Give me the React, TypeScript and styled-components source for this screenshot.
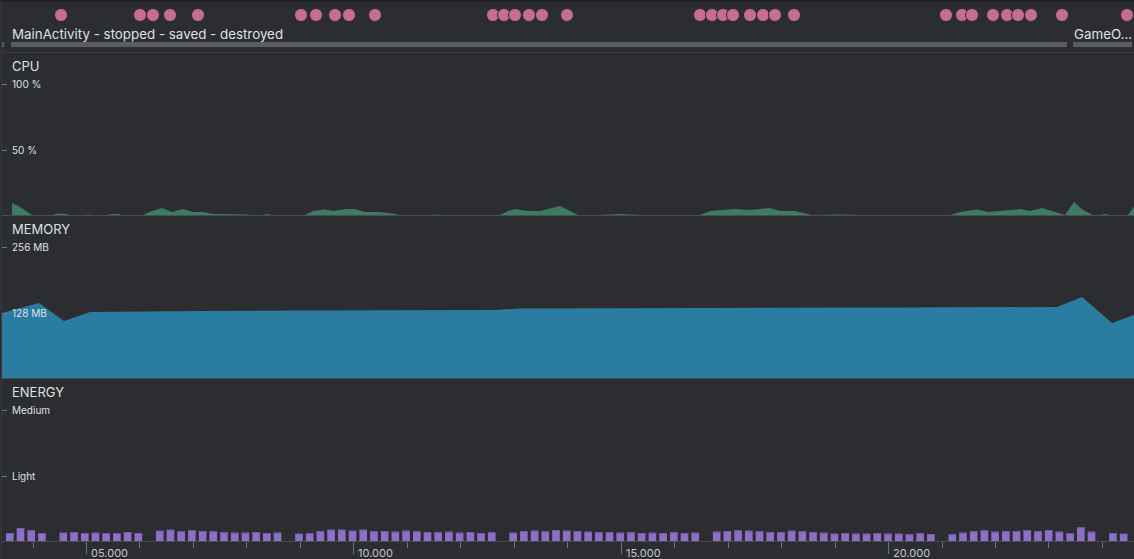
import React from "react";
import styled, { createGlobalStyle } from "styled-components";

const colors = {
  background: "#2b2d30",
  edge: "#393b40",
  topEdge: "#1f2023",
  divider: "#393b40",
  baseline: "#4a4c51",
  tick: "#6f737a",
  text: "#dfe1e5",
  axisText: "#c3c7ce",
  activity: "#5a5d62",
  event: "#c76c92",
  cpu: "#3d7b63",
  memory: "#2a7ca0",
  energy: "#8d6fc8",
  energyTop: "#7459aa",
};

const FONT = `Inter, "Noto Sans", "Liberation Sans", sans-serif`;

// chart columns start at x = 2 on the page (1px padding + 1px edge)
const VIEW_X = 2;
const CHART_W = 1132;
const CHART_H = 162;

const EVENT_X = [
  61, 140, 153, 170, 198, 301, 316, 335, 349, 375, 493, 504, 515, 529, 542, 567,
  700, 712, 723, 733, 750, 763, 775, 794, 946, 962, 972, 993, 1007, 1018, 1031,
  1062, 1127,
];

const ACTIVITIES = [
  { left: 0, width: 2, label: "" },
  { left: 7, width: 1056, label: "MainActivity - stopped - saved - destroyed" },
  { left: 6, width: 59, label: "GameO..." },
];

// page coordinates, shifted into each section below
const CPU_POINTS: [number, number][] = [
  [12, 215], [12, 203], [20, 207], [32, 215], [52, 215], [58, 213.5], [66, 214],
  [70, 215], [85, 215], [88, 214.5], [92, 215], [107, 215], [112, 214], [118, 214],
  [122, 215], [143, 215], [152, 211], [162, 208], [172, 212], [183, 209], [193, 212],
  [203, 212], [213, 214], [247, 214.5], [252, 215], [262, 215], [267, 214], [272, 215],
  [305, 215], [313, 211], [325, 209.5], [333, 211], [347, 209], [355, 209], [365, 212],
  [380, 212], [395, 214], [400, 215], [430, 215], [436, 214.5], [442, 215], [500, 215],
  [508, 211], [515, 209], [528, 211], [540, 211], [548, 209], [560, 206], [568, 210],
  [578, 215], [600, 215], [620, 214], [640, 215], [700, 215], [710, 211], [735, 209],
  [750, 210], [770, 208], [780, 211], [795, 211], [812, 215], [840, 214.5], [860, 215],
  [950, 215], [960, 212], [977, 209.5], [988, 212], [1000, 211], [1020, 209], [1030, 211],
  [1042, 208], [1062, 214], [1065, 215], [1074, 202], [1083, 210], [1093, 215],
  [1100, 215], [1105, 214], [1110, 215], [1128, 215], [1134, 207], [1134, 215],
];

const MEMORY_POINTS: [number, number][] = [
  [2, 378], [2, 313], [39, 303], [64, 321], [90, 312], [200, 311], [300, 310.5],
  [495, 310], [520, 308.5], [700, 308], [900, 307.5], [1057, 307], [1082, 297],
  [1112, 323], [1134, 315], [1134, 378],
];

const ENERGY_HEIGHTS = [
  8, 13, 10.7, 8, 0, 8.3, 9, 8, 8.3, 8, 8, 9, 8, 0, 10.3, 11.3, 9.7, 11, 10, 9.7,
  8.7, 8.3, 8.3, 9, 8, 8.3, 0, 7.3, 7.7, 10, 11.3, 11.3, 10.3, 11.3, 9.7,
  10, 9.3, 10.3, 9.7, 9, 8.7, 9.3, 8.3, 9, 8, 8.7, 0, 8.3, 10, 10.3, 9.7, 11, 10.3,
  10, 9.3, 8.7, 9, 8.3, 8.7, 8, 8.3, 8, 8.7, 8, 8.3, 0, 9.3, 10, 10.7, 10.3, 9.7,
  9, 9, 10.3, 9.7, 9, 8.3, 7.3, 8, 7.3, 7.3, 8, 7.3, 7.3, 6.7, 7.7, 7, 0,
  6.7, 8.3, 9.7, 10.7, 9.3, 10, 10, 11, 10, 11, 9.3, 7.7, 13.7, 9.3, 0, 8, 7.3,
];

const SECOND = 53.47;
const FIVE_SECONDS_X = 86;
const AXIS_LABELS: Record<number, string> = {
  0: "05.000",
  5: "10.000",
  10: "15.000",
  15: "20.000",
};

const toPoints = (pts: [number, number][], top: number) =>
  pts.map(([x, y]) => `${x},${y - top}`).join(" ");

const GlobalStyle = createGlobalStyle`
  html, body {
    margin: 0;
    background: ${colors.background};
  }
  body {
    font-family: ${FONT};
    color: ${colors.text};
    -webkit-font-smoothing: antialiased;
  }
`;

export default function App() {
  return (
    <>
      <GlobalStyle />
      <Page>
        <Frame>
          <Header>
            <EventTrack viewBox={`${VIEW_X} 0 ${CHART_W} 25`}>
              {EVENT_X.map((x, i) => (
                <circle
                  key={i}
                  cx={x}
                  cy={13}
                  r={6.5}
                  fill={colors.event}
                  stroke={colors.background}
                  strokeWidth={1}
                />
              ))}
            </EventTrack>
            <ActivityTrack>
              {ACTIVITIES.map((a, i) => (
                <Activity key={i} $left={a.left} $width={a.width}>
                  <ActivityLabel>{a.label || "\u00a0"}</ActivityLabel>
                  <ActivityBar />
                </Activity>
              ))}
            </ActivityTrack>
          </Header>

          <MonitorSection title="CPU" top="100 %" mid="50 %">
            <polygon points={toPoints(CPU_POINTS, 53)} fill={colors.cpu} />
          </MonitorSection>

          <MonitorSection title="MEMORY" top="256 MB" mid="128 MB">
            <polygon points={toPoints(MEMORY_POINTS, 216)} fill={colors.memory} />
          </MonitorSection>

          <MonitorSection title="ENERGY" top="Medium" mid="Light">
            {ENERGY_HEIGHTS.map((h, i) =>
              h > 0 ? (
                <g key={i}>
                  <rect
                    x={6 + i * 10.71}
                    y={CHART_H - h}
                    width={7.6}
                    height={h}
                    fill={colors.energy}
                  />
                  <rect
                    x={6 + i * 10.71}
                    y={CHART_H - h}
                    width={7.6}
                    height={1}
                    fill={colors.energyTop}
                  />
                </g>
              ) : null
            )}
          </MonitorSection>

          <TimeAxis viewBox={`${VIEW_X} 0 ${CHART_W} 17`}>
            {Array.from({ length: 22 }, (_, i) => {
              const n = i - 1;
              const x = Math.round(FIVE_SECONDS_X + n * SECOND) + 0.5;
              const label = AXIS_LABELS[n];
              return (
                <g key={i}>
                  <line
                    x1={x}
                    x2={x}
                    y1={0}
                    y2={label ? 12 : 6}
                    stroke={colors.tick}
                    strokeWidth={1}
                  />
                  {label && (
                    <AxisText x={x + 4.5} y={15}>
                      {label}
                    </AxisText>
                  )}
                </g>
              );
            })}
          </TimeAxis>
        </Frame>
      </Page>
    </>
  );
}

type SectionProps = {
  title: string;
  top: string;
  mid: string;
  children: React.ReactNode;
};

const MonitorSection = ({ title, top, mid, children }: SectionProps) => (
  <Section>
    <Chart viewBox={`${VIEW_X} 0 ${CHART_W} ${CHART_H}`} preserveAspectRatio="none">
      {children}
    </Chart>
    <Labels>
      <Title>{title}</Title>
      <ScaleMark $gap={4}>{top}</ScaleMark>
      <ScaleMark $gap={54}>{mid}</ScaleMark>
    </Labels>
  </Section>
);

const Page = styled.div`
  width: 1134px;
  height: 559px;
  padding-left: 1px;
  box-sizing: border-box;
  overflow: hidden;
`;

const Frame = styled.div`
  display: flex;
  flex-direction: column;
  height: 100%;
  border-left: 1px solid ${colors.edge};
  border-top: 2px solid ${colors.topEdge};
  box-sizing: border-box;
`;

const Header = styled.header`
  display: flex;
  flex-direction: column;
  height: 50px;
  flex: none;
  border-bottom: 1px solid ${colors.divider};
`;

const EventTrack = styled.svg`
  display: block;
  width: ${CHART_W}px;
  height: 25px;
  flex: none;
`;

const ActivityTrack = styled.div`
  display: flex;
  height: 25px;
`;

const Activity = styled.div<{ $left: number; $width: number }>`
  display: flex;
  flex-direction: column;
  margin-left: ${(p) => p.$left}px;
  width: ${(p) => p.$width}px;
  flex: none;
`;

const ActivityLabel = styled.span`
  display: block;
  padding-left: 1px;
  font-size: 13.35px;
  line-height: 15px;
  white-space: nowrap;
  color: ${colors.text};
`;

const ActivityBar = styled.div`
  height: 5px;
  background: ${colors.activity};
`;

const Section = styled.section`
  display: grid;
  height: ${CHART_H}px;
  flex: none;
  border-bottom: 1px solid ${colors.baseline};

  & > * {
    grid-area: 1 / 1;
  }
`;

const Chart = styled.svg`
  display: block;
  width: ${CHART_W}px;
  height: ${CHART_H}px;
`;

const Labels = styled.div`
  display: flex;
  flex-direction: column;
  z-index: 1;
`;

const Title = styled.h3`
  margin: 5px 0 0 10px;
  font-size: 13px;
  line-height: 16px;
  font-weight: 400;
  color: ${colors.text};
`;

const ScaleMark = styled.div<{ $gap: number }>`
  display: flex;
  align-items: center;
  gap: 5px;
  margin-top: ${(p) => p.$gap}px;
  height: 12px;
  font-size: 10px;
  line-height: 12px;
  color: ${colors.text};

  &::before {
    content: "";
    width: 5px;
    height: 1px;
    background: ${colors.tick};
  }
`;

const TimeAxis = styled.svg`
  display: block;
  width: ${CHART_W}px;
  height: 17px;
  flex: none;
`;

const AxisText = styled.text`
  font-family: ${FONT};
  font-size: 11px;
  fill: ${colors.axisText};
`;
